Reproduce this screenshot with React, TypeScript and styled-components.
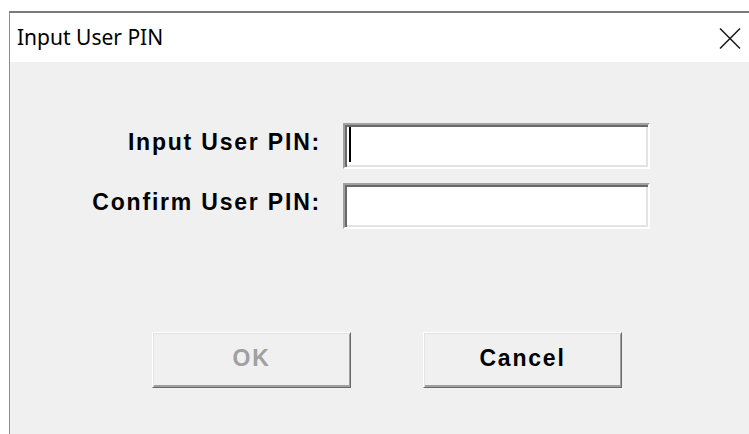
import React from "react";
import styled, { createGlobalStyle } from "styled-components";

const Global = createGlobalStyle`
  html, body {
    margin: 0;
    padding: 0;
    background: #ffffff;
    height: 100%;
    overflow: hidden;
  }
  #root { height: 100%; }
`;

const Screen = styled.div`
  height: 100%;
  padding: 11px 0 0 9px;
  box-sizing: border-box;
`;

const Window = styled.div`
  height: 100%;
  display: flex;
  flex-direction: column;
  border-top: 2px solid #7a7a7a;
  border-left: 1px solid #8c8c8c;
  box-sizing: border-box;
`;

const TitleBar = styled.div`
  height: 49px;
  flex: none;
  background: #ffffff;
  display: flex;
  align-items: center;
  justify-content: space-between;
  padding: 0 8px 0 7px;
`;

const Title = styled.span`
  font-family: "Noto Sans", "Open Sans", sans-serif;
  font-size: 21px;
  color: #000000;
  margin-top: -1px;
`;

const CloseIcon = styled.svg`
  width: 22px;
  height: 21px;
  display: block;
  margin-top: 2px;
`;

const Client = styled.div`
  flex: 1;
  background: #f0f0f0;
  padding: 61px 0 0 71px;
  display: flex;
  flex-direction: column;
`;

const Form = styled.div`
  display: grid;
  grid-template-columns: 240px 307px;
  column-gap: 22px;
  row-gap: 14px;
  align-items: center;
`;

const Label = styled.span`
  font-family: "Liberation Sans", Arial, sans-serif;
  font-weight: bold;
  font-size: 23px;
  letter-spacing: 1.8px;
  color: #000000;
  text-align: right;
  white-space: nowrap;
  margin-top: -8px;
`;

const Field = styled.div`
  height: 46px;
  box-sizing: border-box;
  background: #ffffff;
  border: 2px solid;
  border-color: #a0a0a0 #ffffff #ffffff #a0a0a0;
  box-shadow: inset 2px 2px 0 #696969, inset -2px -2px 0 #e3e3e3;
  display: flex;
  align-items: center;
  padding-left: 4px;
`;

const Caret = styled.span`
  width: 2px;
  height: 35px;
  background: #000000;
  margin-top: -4px;
`;

const Buttons = styled.div`
  display: flex;
  gap: 72px;
  margin: 103px 0 0 71px;
`;

const Button = styled.button<{ $disabled?: boolean }>`
  width: 199px;
  height: 56px;
  box-sizing: border-box;
  background: #f0f0f0;
  border: 1px solid;
  border-color: #ffffff #696969 #696969 #ffffff;
  box-shadow: inset 1px 1px 0 #e3e3e3, inset -1px -1px 0 #a0a0a0, inset 0 -2px 0 #a0a0a0;
  font-family: "Liberation Sans", Arial, sans-serif;
  font-weight: bold;
  font-size: 23px;
  letter-spacing: 1.8px;
  color: ${(p) => (p.$disabled ? "#a0a0a0" : "#000000")};
  padding: 0 0 4px 0;
  cursor: default;
`;

export default function App() {
  return (
    <>
      <Global />
      <Screen>
        <Window>
          <TitleBar>
            <Title>Input User PIN</Title>
            <CloseIcon viewBox="0 0 22 21">
              <path d="M1 0.5 L21 20.5 M21 0.5 L1 20.5" stroke="#1a1a1a" strokeWidth="1.5" fill="none" />
            </CloseIcon>
          </TitleBar>
          <Client>
            <Form>
              <Label>Input User PIN:</Label>
              <Field>
                <Caret />
              </Field>
              <Label>Confirm User PIN:</Label>
              <Field />
            </Form>
            <Buttons>
              <Button $disabled disabled>
                OK
              </Button>
              <Button>Cancel</Button>
            </Buttons>
          </Client>
        </Window>
      </Screen>
    </>
  );
}
